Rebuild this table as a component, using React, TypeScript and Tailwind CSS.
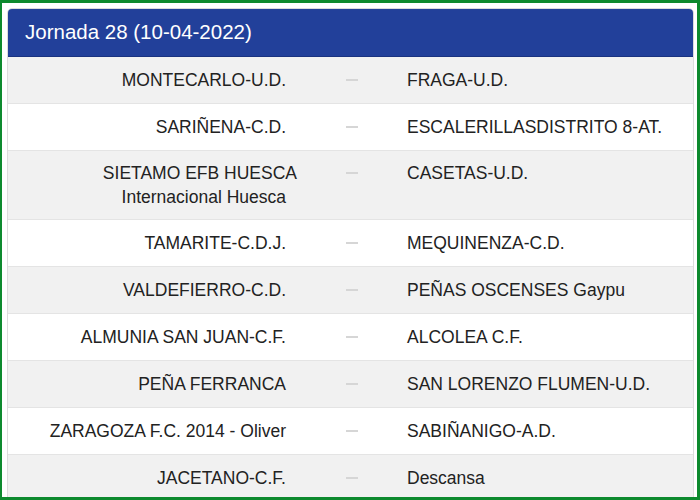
import React from "react";

const rows: { home: string[]; away: string }[] = [
  { home: ["MONTECARLO-U.D."], away: "FRAGA-U.D." },
  { home: ["SARIÑENA-C.D."], away: "ESCALERILLASDISTRITO 8-AT." },
  { home: ["SIETAMO EFB HUESCA", "Internacional Huesca"], away: "CASETAS-U.D." },
  { home: ["TAMARITE-C.D.J."], away: "MEQUINENZA-C.D." },
  { home: ["VALDEFIERRO-C.D."], away: "PEÑAS OSCENSES Gaypu" },
  { home: ["ALMUNIA SAN JUAN-C.F."], away: "ALCOLEA C.F." },
  { home: ["PEÑA FERRANCA"], away: "SAN LORENZO FLUMEN-U.D." },
  { home: ["ZARAGOZA F.C. 2014 - Oliver"], away: "SABIÑANIGO-A.D." },
  { home: ["JACETANO-C.F."], away: "Descansa" },
];

export default function App() {
  return (
    <div
      className="w-[700px] h-[500px] overflow-hidden bg-white border-[#0d8a2e] border-t-[3px] border-l-[2px] border-r-[3px] border-b-[3px] pt-[5px] pl-[5px] pr-[3px]"
      style={{ fontFamily: '"Liberation Sans", Arial, sans-serif' }}
    >
      <div className="border border-[#dcdcdc] rounded-t-[5px] overflow-hidden">
        <div className="h-[48px] bg-[#22409a] border-b border-[#1a3380] flex items-center pl-[17px] text-white text-[20.5px]">
          Jornada 28 (10-04-2022)
        </div>
        {rows.map((r, i) => {
          const multi = r.home.length > 1;
          return (
            <div
              key={i}
              className={`flex border-b border-[#e4e4e4] text-[#222] text-[17.5px] leading-[24px] ${
                i % 2 === 0 ? "bg-[#f1f1f1]" : "bg-white"
              } ${multi ? "py-[10px]" : "py-[11px]"}`}
            >
              <div className="w-[292px] shrink-0 text-right">
                {r.home.map((h, j) => (
                  <div
                    key={j}
                    className={multi && j === 0 ? "pr-[3px]" : "pr-[14px]"}
                  >
                    {h}
                  </div>
                ))}
              </div>
              <div className="w-[103px] shrink-0 flex justify-center h-[24px] items-center">
                <div className="w-[12px] h-[2px] bg-[#d6d6d6]" />
              </div>
              <div className="flex-1 pl-[4px]">{r.away}</div>
            </div>
          );
        })}
      </div>
    </div>
  );
}
